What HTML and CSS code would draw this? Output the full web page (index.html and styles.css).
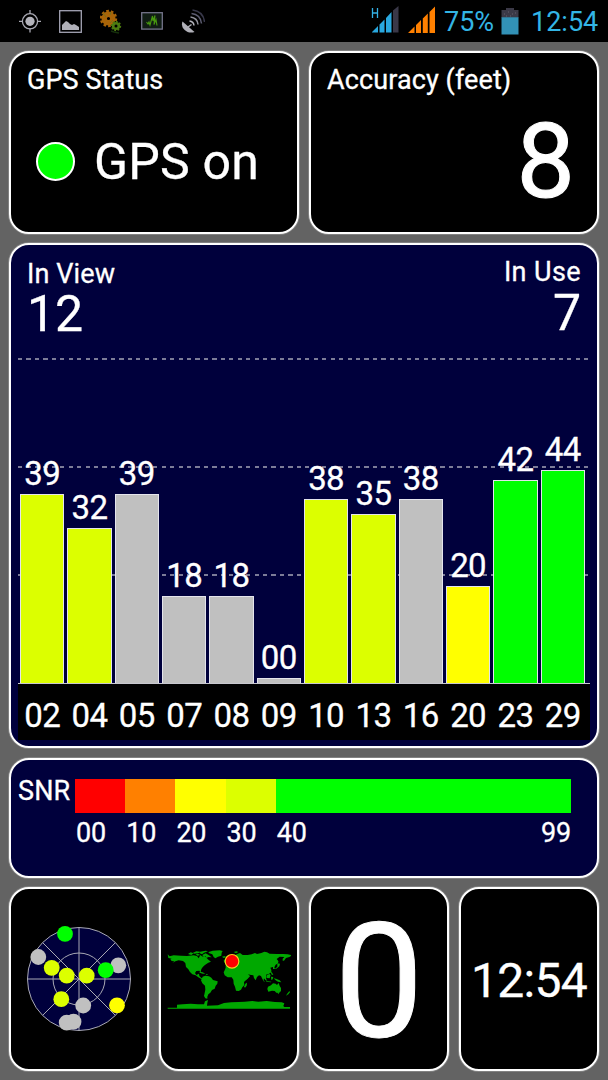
FILE: index.html
```html
<!DOCTYPE html>
<html lang="en">
<head>
    <meta charset="UTF-8">
    <meta name="viewport" content="width=device-width, initial-scale=1.0">
    <title>GPS Test</title>
    <link rel="stylesheet" href="styles.css">
</head>
<body>
    <header class="status-bar">
        <div class="notifications">
            <!-- Location -->
            <svg width="22" height="23" viewBox="0 0 22 23" fill="none" stroke="#a9a9b3" stroke-width="1.3">
                <circle cx="11" cy="11.3" r="7.6"/>
                <circle cx="11" cy="11.3" r="4.6" fill="#b4b4bc" stroke="none"/>
                <path d="M11 0v4M11 18.6v4M0 11.3h3.5M18.5 11.3H22"/>
            </svg>
            <!-- Picture -->
            <svg width="23" height="23" viewBox="0 0 23 23">
                <rect x=".7" y=".7" width="21.6" height="21.6" fill="none" stroke="#a4a4b4" stroke-width="1.3"/>
                <path d="M3 20v-5l2-2 2-2 2 1 2 2 2 1 2-1 2 1 3 2v3z" fill="#b0b0b8"/>
            </svg>
            <!-- Gears -->
            <svg class="gears" width="22" height="25" viewBox="0 0 22 25">
                <circle cx="8.5" cy="9.5" r="7.2" fill="none" stroke="#a86408" stroke-width="3" stroke-dasharray="2.6 1.9"/>
                <circle cx="8.5" cy="9.5" r="4.300" fill="none" stroke="#a86408" stroke-width="5.400"/>
                <path d="M3 4l3 4M11 3l-1 3M13 11l-3 3" stroke="#777018" stroke-width="1"/>
                <circle cx="16" cy="17" r="4.2" fill="none" stroke="#4c7c10" stroke-width="2" stroke-dasharray="1.7 1.5"/>
                <circle cx="16" cy="17" r="2.8" fill="none" stroke="#4c7c10" stroke-width="2.600"/>
                <path d="M11 22l3 1 5 1" stroke="#15300c" stroke-width="1.5" fill="none"/>
            </svg>
            <!-- Monitor -->
            <svg width="22" height="18" viewBox="0 0 22 18">
                <rect x=".7" y=".7" width="20.6" height="16.4" fill="#101c14" stroke="#74748a" stroke-width="1.3"/>
                <path d="M5.500 10l1.500 2 1-2 1 3 2.500-9 .5 5 2-5.500-1 9 2-5 1 6" fill="none" stroke="#489a10" stroke-width="1.1"/>
            </svg>
            <!-- Satellite dish -->
            <svg width="24" height="24" viewBox="0 0 24 24">
                <path d="M1.500 12.500C-1 19 6 25.500 13.500 23z" fill="#b0b0b8"/>
                <path d="M7 18l3.500-2.500" stroke="#b0b0b8" stroke-width="1.5"/>
                <g fill="none" stroke-width="1.5">
                    <path d="M8.500 12q4 .5 4.500 4.500" stroke="#b4b4bc"/>
                    <path d="M9.500 8q7 1 7.500 7.500" stroke="#92929c"/>
                    <path d="M10.500 4.500q9 1 10 10" stroke="#5c5c70"/>
                    <path d="M11.500 1q11 1.500 12 12" stroke="#38384a"/>
                </g>
            </svg>
        </div>
        <div class="system">
            <svg class="signal-h" width="29" height="28" viewBox="0 0 29 28">
                <path d="M1.500 2v10M6.500 2v10M1.500 7h5" stroke="#33b0e4" stroke-width="1.3" fill="none"/>
                <path d="M1 26.500v-.5l6-6v6.500zM8.500 26.500v-8l5-5v13zM15 26.500V12l5.500-6v20.500z" fill="#29a8df"/>
                <path d="M22 26.500V4.500L27.500 0v26.500z" fill="#3a3848"/>
            </svg>
            <svg class="signal-full" width="27" height="27" viewBox="0 0 27 27">
                <path d="M0 27l6.500-6.500V27zM8 27v-8l5-5v13zM14.800 27V12.500l5-5V27zM21.500 27V6L27 .5V27z" fill="#ff8000"/>
            </svg>
            <span class="percent">75%</span>
            <svg class="battery" width="18" height="27" viewBox="0 0 18 27">
                <path d="M5 0h8v2h4.500v8H.5V2H5z" fill="#3b3947"/>
                <path d="M3 6h1M7 4h1M11 6h1M14 5h1M9 8h1M5 8h1" stroke="#66606e"/>
                <path d="M.5 9.300h17V26.500H.5z" fill="#3291b6"/>
            </svg>
            <span class="clock">12:54</span>
        </div>
    </header>

    <main>
        <section class="card status-card">
            <h2>GPS Status</h2>
            <div class="gps-state">
                <span class="led"></span>
                <span class="gps-text">GPS on</span>
            </div>
        </section>

        <section class="card accuracy-card">
            <h2>Accuracy (feet)</h2>
            <div class="accuracy-value">8</div>
        </section>

        <section class="card blue chart-card">
            <div class="chart-head">
                <div class="in-view">
                    <h2>In View</h2>
                    <div class="count">12</div>
                </div>
                <div class="in-use">
                    <h2>In Use</h2>
                    <div class="count">7</div>
                </div>
            </div>
            <div class="plot">
                <div class="sat"><span>39</span><div class="bar lime" style="height: 189px"></div></div>
                <div class="sat"><span>32</span><div class="bar lime" style="height: 155px"></div></div>
                <div class="sat"><span>39</span><div class="bar gray" style="height: 189px"></div></div>
                <div class="sat"><span>18</span><div class="bar gray" style="height: 87px"></div></div>
                <div class="sat"><span>18</span><div class="bar gray" style="height: 87px"></div></div>
                <div class="sat"><span>00</span><div class="bar gray" style="height: 5px"></div></div>
                <div class="sat"><span>38</span><div class="bar lime" style="height: 184px"></div></div>
                <div class="sat"><span>35</span><div class="bar lime" style="height: 169px"></div></div>
                <div class="sat"><span>38</span><div class="bar gray" style="height: 184px"></div></div>
                <div class="sat"><span>20</span><div class="bar yellow" style="height: 97px"></div></div>
                <div class="sat"><span>42</span><div class="bar green" style="height: 203px"></div></div>
                <div class="sat"><span>44</span><div class="bar green" style="height: 213px"></div></div>
            </div>
            <div class="sat-ids">
                <span>02</span><span>04</span><span>05</span><span>07</span><span>08</span><span>09</span>
                <span>10</span><span>13</span><span>16</span><span>20</span><span>23</span><span>29</span>
            </div>
        </section>

        <section class="card blue snr-card">
            <h2>SNR</h2>
            <div class="scale">
                <div class="step"><i class="red"></i><span>00</span></div>
                <div class="step"><i class="orange"></i><span>10</span></div>
                <div class="step"><i class="yellow"></i><span>20</span></div>
                <div class="step"><i class="lime"></i><span>30</span></div>
                <div class="step last"><i class="green"></i><span>40</span><span>99</span></div>
            </div>
        </section>

        <div class="bottom-row">
            <section class="card tile">
                <!-- Sky view -->
                <svg width="106" height="106" viewBox="0 0 106 106">
                    <g fill="none" stroke="#a9a9b4" stroke-width="1">
                        <circle cx="53" cy="53" r="51.500" fill="#00003c"/>
                        <circle cx="53" cy="53" r="26"/>
                        <path d="M53 1.500v103M1.500 53h103M16.600 16.600l72.800 72.800M89.400 16.600L16.600 89.400"/>
                    </g>
                    <g fill="#c0c0c0">
                        <circle cx="12.300" cy="31" r="7.900"/>
                        <circle cx="92.300" cy="39.300" r="7.900"/>
                        <circle cx="57.200" cy="79.500" r="7.900"/>
                        <circle cx="47.500" cy="95.700" r="7.900"/>
                        <circle cx="40.700" cy="96.700" r="7.900"/>
                    </g>
                    <g fill="#dcff00">
                        <circle cx="25.700" cy="41.800" r="7.900"/>
                        <circle cx="40.700" cy="49.700" r="7.900"/>
                        <circle cx="60.700" cy="49.700" r="7.900"/>
                        <circle cx="35.300" cy="73.200" r="7.900"/>
                    </g>
                    <circle cx="91" cy="79.300" r="7.900" fill="#ff0"/>
                    <g fill="#0f0">
                        <circle cx="39" cy="7.900" r="7.900"/>
                        <circle cx="79.700" cy="44.200" r="7.900"/>
                    </g>
                </svg>
            </section>
            <section class="card tile">
                <!-- World map -->
                <svg class="world" width="124" height="60" viewBox="34 89 372 180">
                    <g fill="#00a800">
                        <!-- Americas -->
                        <path d="M36 102l6 6 12-3 22 1 18 1 20-2 10 2 5 7 5-10 7 5 7-2 4 5 7 7 7 5-8 3-7 5-6 4-6 7-3 6v7l-5-5-9 1-4 6 4 6 8-4 1 7 6 6 5 2-5 1-9-5-8-6-10-3-7-7-5-8-7-7-2-12-7-6-13-2-10 3-9 5 6-5-8-1-4-5 4-2-10-2z"/>
                        <path d="M97 101l8-5 9 3-7 5zM112 97l10-4 12 1-4 4-14 2zM133 94l17-3 7 2-12 4-6 5-7-3zM141 103l9-4 10 6 8 6-9-1-7 3-2-6-9 2zM120 102l6-2 8 4-8 2z"/>
                        <path d="M159 95l12-4 21-1 9 2-3 5-1 9-10 3-8 5-5-4-4-8-11-4zM199 109l8-2 5 4-8 2z"/>
                        <path d="M131 154l10 2 8 4-8 0-9-3zM151 161h5v2h-5z"/>
                        <path d="M141 169l8-3 11 2 7 4 5 7 14 4-1 7-5 6-3 9-8 4-5 8-6 5-3 7 0 6-6-1-4-7 2-9 2-10-1-12-8-7-4-9 3-6z"/>
                        <!-- Africa and Eurasia -->
                        <path d="M210 144l12-2 11-2 7 5 14 1 8 4 5 12 5 4 9-1-6 10-10 10 1 9-6 7-4 7-7 4-8-1-3-12-4-9-1-12-5-7-12 0-9-6-3-9z"/>
                        <path d="M269 190l5-3-1 9-5 6-3-3z"/>
                        <path d="M210 142l0-10 10-2 1-10 7-1 5-4 2-6 8-7 10-4 8 6 15 0 12-2 10-4 6 3 13-3 9-4 8 2 8 4 22 1 18 0 14 1 13 3-8 5-10 3-6 8-4 0 0-6 5-5-14-1-9 7 5 7-1 6-7 4-4 8 2 5-6 0 0-6-8 2 3 7 0 7-8 5-8 2 2 7-3 8-5-5-1 7 4 6-4-3-5-9-3-7-6-2-6 5-4 10-5-7-2-8-11-2-5-3 6 8-9 9-9 4-6-8-7-12 6-3-9-3-9 2-3-6-6-2 1 4-6-5-7 2-6 4-5 3z"/>
                        <path d="M204 121l4-6 6 4 2 7-9 2zM234 95l8-2 6 2-7 4zM288 98l8-3M365 129l8 1-2 8-9 7-5 1 8-7zM364 117l4 8-2 2z"/>
                        <path d="M320 159l7 8 4 8 4 6-5-1-8-11zM333 165l8-4 4 3-3 10-8-1zM346 169l7 1-2 7-4 2zM344 153l6 5 3 6-5-1zM332 182l15 2-1 2-14-2zM354 174l7 1 11 5 5 6-10-2-7-4z"/>
                        <!-- Oceania -->
                        <path d="M337 199l9-4 6-6 8 1 4 4 5-6 3 9 4 6 0 9-6 6-8-1-5-5-8-1-11 3-3-8z"/>
                        <path d="M366 218l4 0-2 4zM401 212l2 4-5 6-7 4 3-5z"/>
                        <!-- Antarctica -->
                        <path d="M36 262h28v-9l17-1 24-2 22 2 18 0 3-9 9-4-2 9-1 8 33-1 18-7 22-2 22-1 18-1 23-2 18 2 25-2 25 3 20 1 8 3-3 8 3 3h17v5H36z"/>
                    </g>
                    <circle cx="229" cy="123" r="20.500" fill="#f00" stroke="#f5d020" stroke-width="3.500"/>
                </svg>
            </section>
            <section class="card tile"><span class="speed">0</span></section>
            <section class="card tile"><span class="time">12:54</span></section>
        </div>
    </main>
</body>
</html>
```
FILE: styles.css
```css
* {
    box-sizing: border-box;
}
body {
    margin: 0;
    width: 608px;
    height: 1080px;
    overflow: hidden;
    background-color: #636363;
    color: #fff;
    font-family: Roboto, sans-serif;
}
svg {
    display: block;
    flex: none;
}
h2 {
    margin: 0;
    font-size: 27px;
    font-weight: 400;
    line-height: 32px;
    letter-spacing: 0.1px;
    white-space: nowrap;
}
main {
    -webkit-text-stroke: 0.3px #fff;
}

/* Status bar */
.status-bar {
    display: flex;
    justify-content: space-between;
    height: 42px;
    padding: 0 10px 0 19px;
    background-color: #000;
}
.notifications {
    display: flex;
    align-items: center;
    gap: 18px;
}
.gears {
    margin-right: 1px;
}
.system {
    display: flex;
    align-items: center;
    color: #33b5e5;
    font-size: 27px;
    line-height: 42px;
}
.system span {
    padding-top: 2px;
}
.signal-h {
    margin-top: -3px;
    margin-right: 8px;
}
.signal-full {
    margin-top: -3px;
    margin-right: 9px;
}
.percent {
    width: 57px;
}
.battery {
    margin-right: 12px;
}
.clock {
    width: 67px;
}

/* Cards */
main {
    display: grid;
    grid-template-columns: 290px 290px;
    grid-template-rows: 183px 505px 120px 184px;
    gap: 9px 10px;
    padding: 9px;
}
.card {
    border: 2px solid #fff;
    border-radius: 20px;
    background-color: #000;
    box-shadow: 0 0 0 1px rgba(255, 255, 255, 0.2);
}
.blue {
    background-color: #00003c;
}
.status-card,
.accuracy-card {
    padding: 11px 16px;
}
.gps-state {
    display: flex;
    align-items: center;
    gap: 19px;
    margin-top: 36px;
    padding-left: 9px;
}
.led {
    width: 39px;
    height: 39px;
    border: 2px solid #fff;
    border-radius: 50%;
    background-color: #0f0;
}
.gps-text {
    padding-top: 2px;
    font-size: 50px;
    line-height: 56px;
    letter-spacing: 0.2px;
}
.accuracy-value {
    margin-top: 14px;
    padding-right: 6px;
    font-size: 104px;
    line-height: 104px;
    text-align: right;
    -webkit-text-stroke-width: 1px;
}

/* Satellite chart */
.chart-card,
.snr-card {
    grid-column: 1 / 3;
}
.chart-card {
    padding: 0 7px;
}
.chart-head {
    display: flex;
    justify-content: space-between;
    height: 112px;
    padding: 13px 9px 0;
}
.in-use {
    margin-top: -2px;
    text-align: right;
}
.in-use h2 {
    letter-spacing: 0.4px;
}
.count {
    font-size: 50px;
    line-height: 48px;
}
.in-use .count {
    padding-top: 1px;
}
.plot {
    display: flex;
    align-items: flex-end;
    gap: 3px;
    height: 327px;
    padding: 0 5px 0 2px;
    border-bottom: 1px solid #c8c8d0;
    background-image:
        repeating-linear-gradient(90deg, #7c7c98 0 4.2px, transparent 4.2px 8.45px),
        repeating-linear-gradient(90deg, #7c7c98 0 4.2px, transparent 4.2px 8.45px),
        repeating-linear-gradient(90deg, #7c7c98 0 4.2px, transparent 4.2px 8.45px);
    background-size: 100% 2px;
    background-position: 0 1px, 0 109px, 0 217px;
    background-repeat: no-repeat;
}
.sat {
    flex: 1;
    font-size: 33px;
    line-height: 40px;
    letter-spacing: -0.6px;
    text-align: center;
}
.sat span {
    display: block;
}
.bar {
    border: 1px solid #e4e4ec;
    border-bottom: none;
}
.sat-ids {
    display: flex;
    gap: 3px;
    height: 56px;
    padding: 0 5px 0 2px;
    background-color: #000;
    font-size: 33px;
    line-height: 63px;
    letter-spacing: -0.6px;
    text-align: center;
}
.sat-ids span {
    flex: 1;
}
.red { background-color: #f00; }
.orange { background-color: #ff8000; }
.yellow { background-color: #ff0; }
.lime { background-color: #dcff00; }
.green { background-color: #0f0; }
.gray { background-color: #c0c0c0; }

/* SNR legend */
.snr-card {
    display: flex;
    margin-top: 1px;
    margin-bottom: -1px;
    padding: 15px 26px 0 7px;
}
.snr-card h2 {
    width: 57px;
}
.scale {
    display: flex;
    flex: 1;
    padding-top: 4px;
}
.step {
    width: 50.2px;
    font-size: 27px;
    line-height: 40px;
}
.step span {
    padding-left: 1px;
    letter-spacing: -0.2px;
}
.step i {
    display: block;
    height: 34px;
}
.last {
    display: flex;
    flex: 1;
    flex-wrap: wrap;
    align-content: flex-start;
    justify-content: space-between;
}
.last i {
    width: 100%;
}

/* Bottom tiles */
.bottom-row {
    display: grid;
    grid-column: 1 / 3;
    grid-template-columns: repeat(4, 140px);
    gap: 10px;
    margin-top: 1px;
    margin-bottom: -1px;
}
.tile {
    display: flex;
    align-items: center;
    justify-content: center;
    min-width: 0;
}
.world {
    margin-top: 2px;
    margin-left: -1px;
}
.speed {
    padding-top: 5px;
    font-size: 159px;
    line-height: 175px;
    -webkit-text-stroke-width: 1px;
}
.time {
    padding-top: 2px;
    font-size: 48px;
    letter-spacing: -0.7px;
}
```
